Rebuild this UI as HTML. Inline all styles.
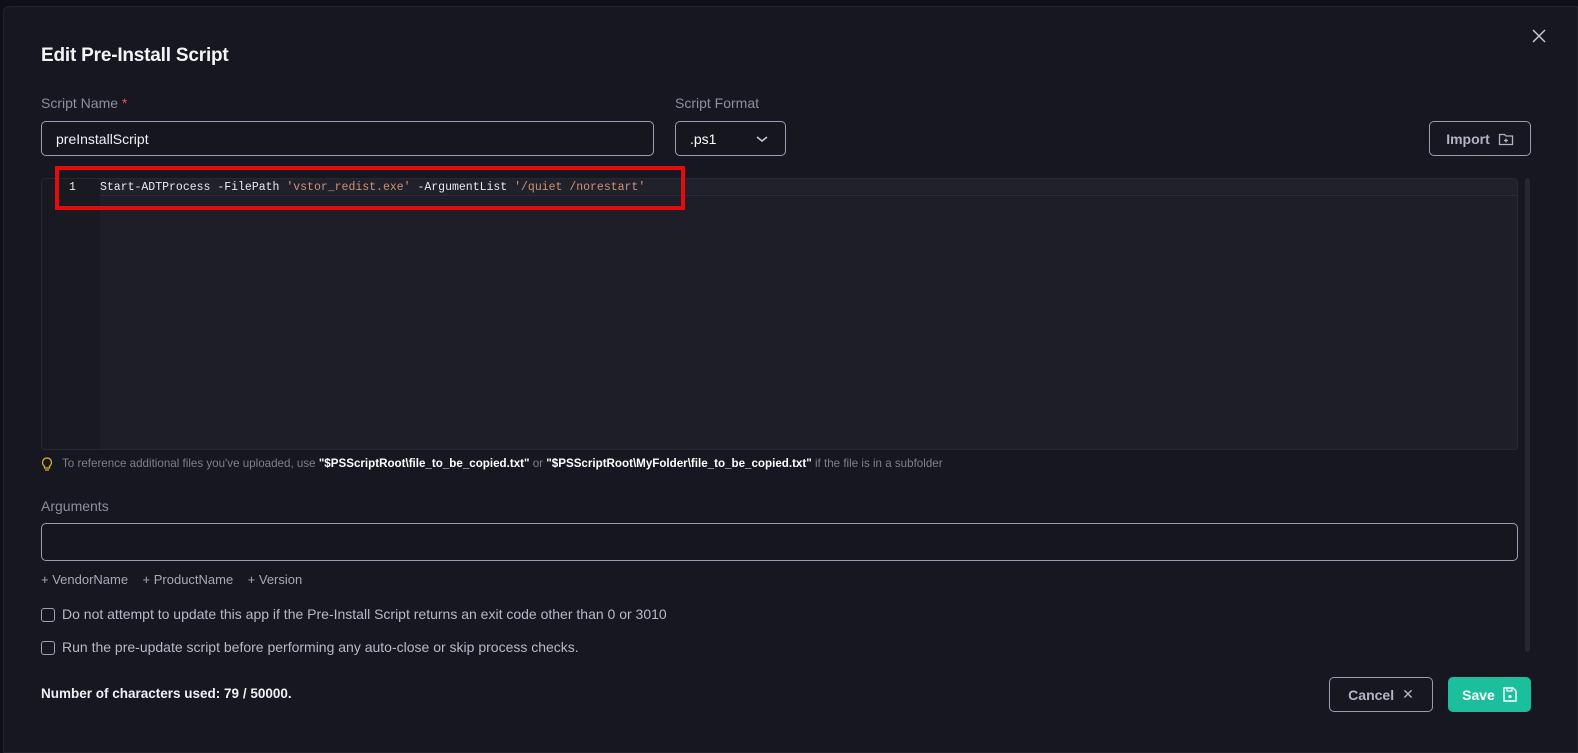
<!DOCTYPE html>
<html><head><meta charset="utf-8"><style>
*{box-sizing:border-box;margin:0;padding:0}
body{width:1578px;height:753px;background:#0f1017;font-family:"Liberation Sans",sans-serif;color:#fff;overflow:hidden;position:relative}
.modal{position:absolute;left:3px;top:6px;width:1575px;height:747px;background:#161720;border:1px solid #22232c;border-radius:6px 0 0 0}
.abs{position:absolute}
h1{position:absolute;left:41px;top:45px;font-size:19px;font-weight:bold;color:#f4f4f6;letter-spacing:-0.2px}
.lbl{font-size:14px;color:#8e8ea0}
.inp{border:1px solid #9d9cb4;border-radius:5px;background:#15161e}
.mono{font-family:"Liberation Mono",monospace;font-size:11.5px}
.btn{border:1px solid #9d9cb4;border-radius:5px;font-size:14px;font-weight:bold;color:#b3b3c4;display:flex;align-items:center;justify-content:center;gap:8px}
.cb{width:14px;height:14px;border:1px solid #a0a0b4;border-radius:3px}
.t{font-size:14px;color:#b8b8c8}
</style></head><body>
<div class="modal"></div>
<svg class="abs" style="left:1532px;top:29px" width="14" height="14" viewBox="0 0 14 14"><path d="M1 1L13 13M13 1L1 13" stroke="#c8c8d4" stroke-width="1.5"/></svg>
<h1>Edit Pre-Install Script</h1>
<div class="abs lbl" style="left:41px;top:95px">Script Name <span style="color:#e05555">*</span></div>
<div class="abs inp" style="left:41px;top:121px;width:613px;height:35px"><span class="abs" style="left:14px;top:9px;font-size:14px;color:#f0f0f4">preInstallScript</span></div>
<div class="abs lbl" style="left:675px;top:95px">Script Format</div>
<div class="abs inp" style="left:675px;top:121px;width:111px;height:35px"><span class="abs" style="left:14px;top:9px;font-size:14px">.ps1</span>
<svg class="abs" style="left:80px;top:12px" width="12" height="10" viewBox="0 0 12 10"><path d="M1 3L6 7L11 3" stroke="#c8c8d4" stroke-width="1.6" fill="none"/></svg></div>
<div class="abs btn" style="left:1429px;top:121px;width:102px;height:35px">Import
<svg width="16" height="16" viewBox="0 0 16 16"><path d="M1.5 3.5h5l1.5 1.5h6.5v8.5h-13z" stroke="#b3b3c4" fill="none" stroke-width="1.3"/><path d="M8 7.5v4M6 9.5h4" stroke="#b3b3c4" stroke-width="1.3"/></svg></div>
<div class="abs" style="left:41px;top:178px;width:1477px;height:272px;background:#1d1e28;border:1px solid #272833;border-radius:4px;overflow:hidden">
<div class="abs" style="left:0;top:0;width:58px;height:272px;background:#181921"></div>
<div class="abs" style="left:58px;top:0;width:1420px;height:17px;background:#20212b;border-bottom:1px solid #2b2c36"></div>
<div class="abs mono" style="left:27px;top:2px;color:#e8e8ee">1</div>
<div class="abs mono" style="left:58px;top:2px;color:#e8e8ee;white-space:pre">Start-ADTProcess -FilePath <span style="color:#ce9178">'vstor_redist.exe'</span> -ArgumentList <span style="color:#ce9178">'/quiet /norestart'</span></div>
</div>
<div class="abs" style="left:55px;top:166px;width:630px;height:44px;border:4px solid #e30b0b"></div>
<div class="abs" style="left:1525px;top:178px;width:5px;height:474px;background:#262731;border-radius:3px"></div>
<svg class="abs" style="left:41px;top:457px" width="12" height="15" viewBox="0 0 12 15"><path d="M6 1a4.5 4.5 0 0 0-2.5 8.2V11h5V9.2A4.5 4.5 0 0 0 6 1zM4 13h4" stroke="#e0b020" fill="none" stroke-width="1.3"/></svg>
<div class="abs" style="left:62px;top:457px;font-size:11.6px;color:#7e7e90;white-space:nowrap">To reference additional files you've uploaded, use <b style="color:#fff">"$PSScriptRoot\file_to_be_copied.txt"</b> or <b style="color:#fff">"$PSScriptRoot\MyFolder\file_to_be_copied.txt"</b> if the file is in a subfolder</div>
<div class="abs lbl" style="left:41px;top:498px">Arguments</div>
<div class="abs inp" style="left:41px;top:523px;width:1477px;height:38px"></div>
<div class="abs" style="left:41px;top:572px;font-size:13px;color:#a8a8b8">+ VendorName&nbsp;&nbsp;&nbsp;&nbsp;+ ProductName&nbsp;&nbsp;&nbsp;&nbsp;+ Version</div>
<div class="abs cb" style="left:41px;top:608px"></div>
<div class="abs t" style="left:62px;top:606px">Do not attempt to update this app if the Pre-Install Script returns an exit code other than 0 or 3010</div>
<div class="abs cb" style="left:41px;top:641px"></div>
<div class="abs t" style="left:62px;top:639px">Run the pre-update script before performing any auto-close or skip process checks.</div>
<div class="abs" style="left:41px;top:686px;font-size:13.5px;font-weight:bold;color:#f0f0f4">Number of characters used: 79 / 50000.</div>
<div class="abs btn" style="left:1329px;top:677px;width:104px;height:35px">Cancel <span style="font-weight:normal;font-size:14px">✕</span></div>
<div class="abs btn" style="left:1448px;top:677px;width:83px;height:35px;background:#1cbf9c;border-color:#1cbf9c;color:#fff">Save
<svg width="14" height="15" viewBox="0 0 14 15"><path d="M1 1h9l3 3v10H1z" stroke="#fff" fill="none" stroke-width="1.4"/><path d="M4 1v3h5V1" stroke="#fff" fill="none" stroke-width="1.2"/><circle cx="7" cy="9.5" r="1.6" fill="#fff"/></svg></div>
</body></html>
